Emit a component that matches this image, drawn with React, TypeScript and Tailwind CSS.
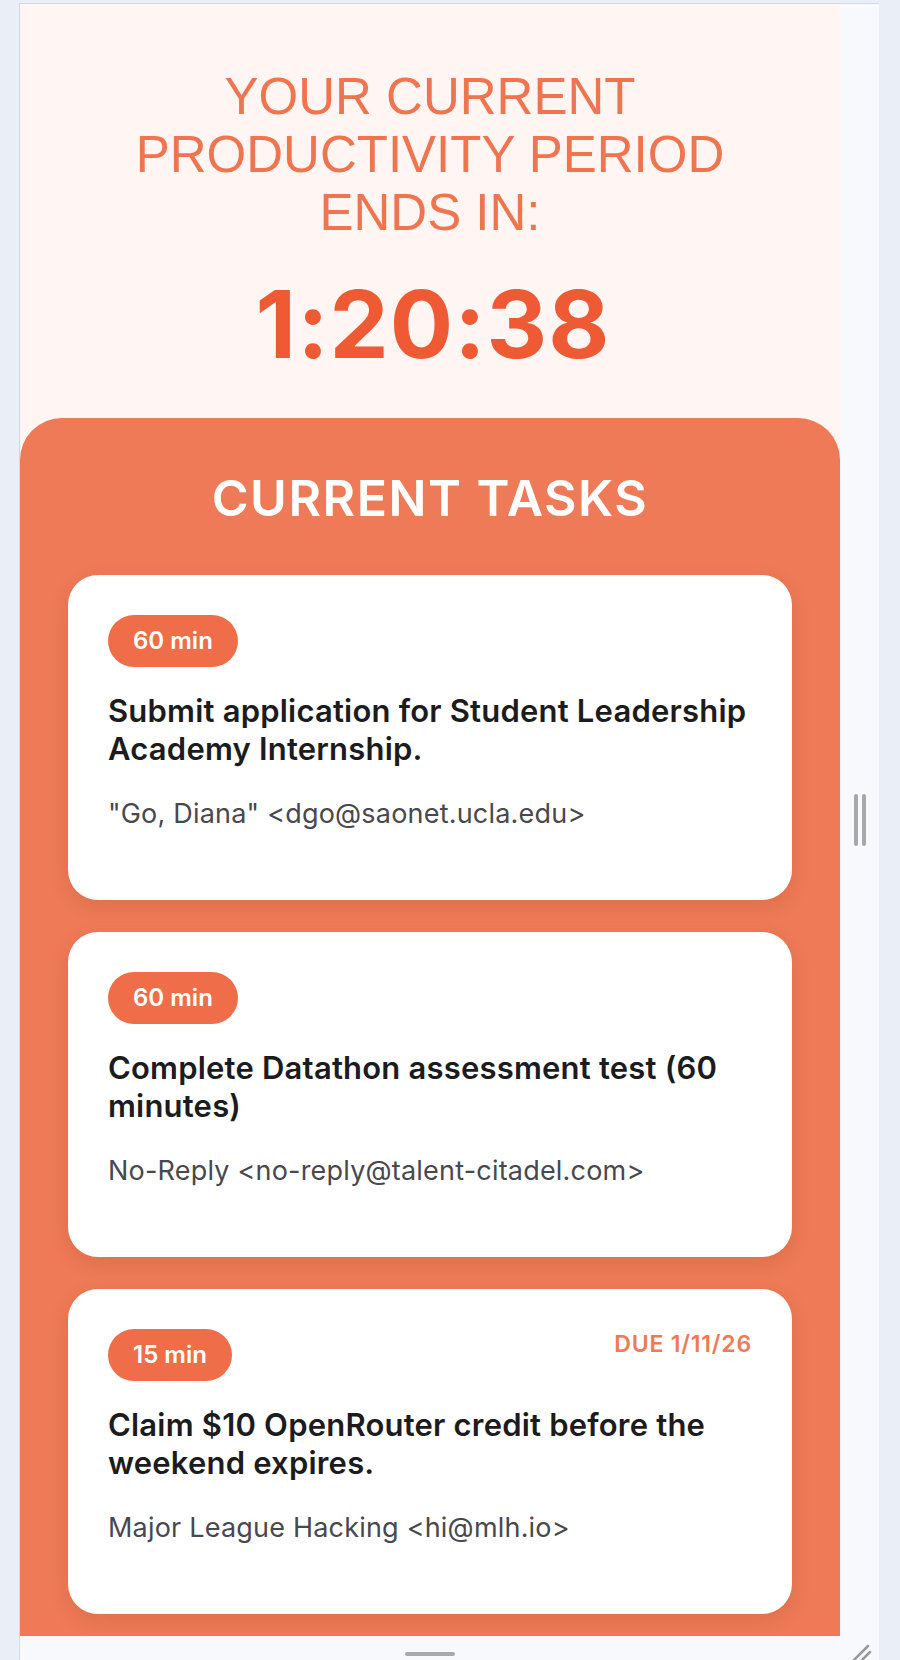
import React from "react";

type Task = {
  minutes: number;
  title: string;
  from: string;
  due?: string;
};

const tasks: Task[] = [
  {
    minutes: 60,
    title: "Submit application for Student Leadership Academy Internship.",
    from: '"Go, Diana" <dgo@saonet.ucla.edu>',
  },
  {
    minutes: 60,
    title: "Complete Datathon assessment test (60 minutes)",
    from: "No-Reply <no-reply@talent-citadel.com>",
  },
  {
    minutes: 15,
    title: "Claim $10 OpenRouter credit before the weekend expires.",
    from: "Major League Hacking <hi@mlh.io>",
    due: "DUE 1/11/26",
  },
];

const TaskCard = ({ task }: { task: Task }) => (
  <div className="rounded-[30px] bg-white pl-[40px] pr-[30px] pt-[40px] pb-[67px] shadow-[0_6px_18px_rgba(150,60,30,0.18)]">
    <div className="flex items-start justify-between">
      <span className="flex h-[52px] items-center rounded-full bg-[#ef6d48] px-[25px] text-[24px] font-semibold text-white">
        {task.minutes} min
      </span>
      {task.due && (
        <span className="mr-[10px] text-[23px] leading-[30px] font-semibold tracking-[0.8px] text-[#ef7a55]">
          {task.due}
        </span>
      )}
    </div>
    <h3 className="mt-[25px] text-[31px] leading-[38px] font-semibold tracking-[0.2px] text-[#1c1c1e]">
      {task.title}
    </h3>
    <p className="mt-[26px] text-[27px] leading-[39px] tracking-[0.2px] text-[#48484e]">{task.from}</p>
  </div>
);

export default function App() {
  return (
    <div className="flex h-[1660px] flex-col overflow-hidden bg-[#e9eef7] pt-[3px] pl-[19px] pr-[21px] font-['Inter',sans-serif]">
      <div className="flex min-h-0 flex-1 flex-col border-t border-l border-[#d3d9e3] bg-[#f7f9fd]">
        <div className="flex min-h-0 flex-1">
          {/* Main panel */}
          <main className="w-[820px] overflow-hidden bg-[#fff5f2]">
            <section className="pt-[64px] pb-[47px] text-center">
              <h1 className="mx-auto max-w-[620px] font-['Liberation_Sans',Arial,sans-serif] text-[51px] leading-[58px] text-[#ef7450] uppercase">
                Your current productivity period ends in:
              </h1>
              <div className="mt-[35px] pl-[6px] text-[94px] leading-[94px] font-bold tracking-[1px] text-[#ee5a34]">
                1:20:38
              </div>
            </section>

            <section className="rounded-t-[42px] bg-[#ee7a57] px-[48px] pt-[50px] pb-[40px]">
              <h2 className="text-center text-[50px] leading-[60px] font-semibold tracking-[1.5px] text-white">
                CURRENT TASKS
              </h2>
              <div className="mt-[47px] flex flex-col gap-[32px]">
                {tasks.map((t, i) => (
                  <TaskCard key={i} task={t} />
                ))}
              </div>
            </section>
          </main>

          {/* Splitter */}
          <div className="flex flex-1 items-center justify-center gap-[4px]">
            <span className="h-[52px] w-[4px] rounded-full bg-[#a8a8a8]" />
            <span className="h-[52px] w-[4px] rounded-full bg-[#a8a8a8]" />
          </div>
        </div>

        {/* Bottom bar */}
        <div className="flex h-[24px] shrink-0">
          <div className="flex w-[820px] justify-center pt-[16px]">
            <span className="h-[4px] w-[50px] rounded-full bg-[#a8a8a8]" />
          </div>
          <div className="flex flex-1 items-end pl-[12px]">
            <svg width="20" height="16" viewBox="0 0 20 16" fill="none">
              <path d="M2 16 L16 2" stroke="#9a9a9a" strokeWidth="2.5" strokeLinecap="round" />
              <path d="M10 16 L18 8" stroke="#9a9a9a" strokeWidth="2.5" strokeLinecap="round" />
            </svg>
          </div>
        </div>
      </div>
    </div>
  );
}
